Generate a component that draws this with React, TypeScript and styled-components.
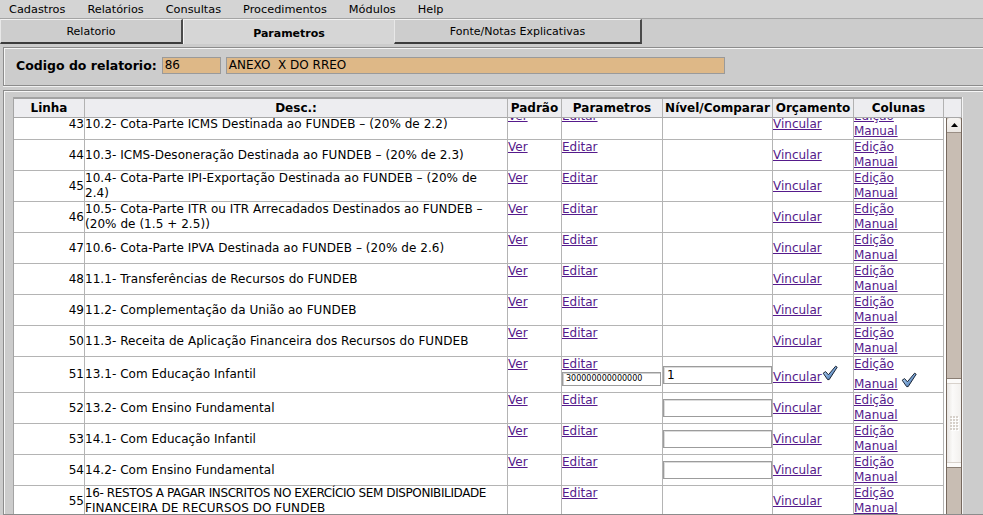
import React from 'react';
import styled, { createGlobalStyle } from 'styled-components';

const Global = createGlobalStyle`
  html, body { margin: 0; padding: 0; overflow: hidden; background: #cccccc; }
  body { font-family: "DejaVu Sans", "Liberation Sans", sans-serif; color: #000; }
  * { box-sizing: border-box; }
`;

const Page = styled.div`
  width: 983px;
  height: 515px;
  overflow: hidden;
  display: flex;
  flex-direction: column;
  background: #cccccc;
`;

const MenuBar = styled.div`
  height: 19px;
  display: flex;
  align-items: center;
  gap: 22px;
  padding-left: 9px;
  background: #d4d4d4;
  border-bottom: 1px solid #a4a4a4;
  font-size: 11.3px;
  flex-shrink: 0;
`;

const MenuItem = styled.span`
  white-space: nowrap;
`;

const TabBar = styled.div`
  height: 25px;
  display: flex;
  flex-shrink: 0;
`;

const Tab = styled.div<{ $w: number; $active?: boolean }>`
  width: ${p => p.$w}px;
  height: 25px;
  display: flex;
  align-items: center;
  justify-content: center;
  font-size: 11px;
  font-weight: ${p => (p.$active ? 700 : 400)};
  background: ${p => (p.$active ? '#d6d6d6' : '#cdcdcd')};
  border-top: 1px solid #f2f2f2;
  border-left: 1px solid ${p => (p.$active ? '#f4f4f4' : '#e8e8e8')};
  border-right: ${p => (p.$active ? '0' : '2px solid #4a4a4a')};
  border-bottom: ${p => (p.$active ? '0' : '2px solid #3c3c3c')};
  padding-top: ${p => (p.$active ? 2 : 0)}px;
`;

const Panel = styled.div`
  margin: 3px -4px 0 3px;
  border: 1px solid #8c8c8c;
  box-shadow: inset 1px 1px 0 #f6f6f6, 0 1px 0 #f0f0f0;
  flex-shrink: 0;
`;

const CodePanel = styled(Panel)`
  height: 39px;
  display: flex;
  align-items: center;
  padding: 0 0 2px 12px;
  gap: 5px;
`;

const Label = styled.span`
  font-weight: 700;
  font-size: 12.5px;
`;

const CodeInput = styled.div<{ $w: number }>`
  width: ${p => p.$w}px;
  height: 17px;
  background: #deb887;
  border: 1px solid #9a9a9a;
  font-size: 12px;
  line-height: 15px;
  padding-left: 2px;
  white-space: pre;
`;

const TablePanel = styled(Panel)`
  margin-top: 4px;
  flex: 1;
  min-height: 0;
  padding: 6px 0 0 9px;
  display: flex;
  flex-direction: column;
`;

const Frame = styled.div`
  width: 950px;
  flex: 1;
  min-height: 0;
  display: flex;
  flex-direction: column;
  border-left: 1px solid #a4a4a4;
  border-right: 1px solid #f4f4f4;
  background: #ffffff;
`;

const COLS = '71px 423px 54px 101px 110px 81px 90px';

const HeaderRow = styled.div`
  display: grid;
  grid-template-columns: ${COLS} 18px;
  border-top: 2px solid #a2a2a2;
  flex-shrink: 0;
`;

const HeadCell = styled.div`
  height: 19px;
  background: #ededf0;
  border-right: 1px solid #b2b2b2;
  border-bottom: 1px solid #a8a8a8;
  font-size: 12px;
  font-weight: 700;
  display: flex;
  align-items: center;
  justify-content: center;
  white-space: nowrap;
  overflow: hidden;
`;

const Body = styled.div`
  flex: 1;
  min-height: 0;
  display: flex;
  gap: 2px;
  overflow: hidden;
`;

const RowsViewport = styled.div`
  width: 930px;
  overflow: hidden;
`;

const RowsList = styled.div<{ $scroll: number }>`
  transform: translateY(-${p => p.$scroll}px);
`;

const Row = styled.div`
  display: grid;
  grid-template-columns: ${COLS};
  border-bottom: 1px solid #b4b4b4;
  font-size: 12px;
  line-height: 15px;
  min-height: 31px;
`;

const Cell = styled.div<{ $align?: 'top' | 'center'; $justify?: 'end' | 'start' }>`
  border-right: 1px solid #b4b4b4;
  display: flex;
  flex-direction: column;
  justify-content: ${p => (p.$align === 'center' ? 'center' : 'flex-start')};
  align-items: ${p => (p.$justify === 'end' ? 'flex-end' : 'flex-start')};
  min-width: 0;
`;

const DescLine = styled.span<{ $tight?: boolean }>`
  display: block;
  white-space: nowrap;
  letter-spacing: ${p => (p.$tight ? '-0.4px' : '0.05px')};
`;

const InlineCell = styled.div`
  border-right: 1px solid #b4b4b4;
  display: flex;
  align-items: center;
  white-space: nowrap;
`;

const Link = styled.a`
  color: #551a8b;
  text-decoration: underline;
  cursor: pointer;
`;

const ParamInput = styled.div`
  width: 99px;
  height: 14px;
  border: 1px solid #9c9c9c;
  box-shadow: inset 1px 1px 0 #d0d0d0;
  font-size: 8px;
  line-height: 12px;
  padding-left: 3px;
  background: #fff;
`;

const NivelInput = styled.div`
  width: 109px;
  height: 18px;
  border: 1px solid #9c9c9c;
  box-shadow: inset 1px 1px 0 #dcdcdc;
  font-size: 12px;
  line-height: 16px;
  padding-left: 3px;
  background: #fff;
`;

const ScrollBar = styled.div`
  width: 16px;
  display: flex;
  flex-direction: column;
  background: #c8bdb3;
  border-left: 1px solid #76695f;
  border-right: 1px solid #76695f;
`;

const ArrowButton = styled.div`
  height: 15px;
  background: linear-gradient(#f6f4f2, #ebe7e3);
  border-bottom: 1px solid #9a8e84;
  border-radius: 3px 3px 0 0;
  display: flex;
  align-items: center;
  justify-content: center;
  flex-shrink: 0;
`;

const Thumb = styled.div<{ $offset: number }>`
  margin-top: ${p => p.$offset}px;
  height: 90px;
  flex-shrink: 0;
  background: linear-gradient(90deg, #e9e6e3, #fbfaf9 40%, #f2f0ee);
  border-top: 1px solid #8a7e74;
  border-bottom: 1px solid #8a7e74;
  display: flex;
  flex-direction: column;
  align-items: center;
  justify-content: center;
  position: relative;
`;

const ThumbBand = styled.div<{ $pos: 'top' | 'bottom' }>`
  position: absolute;
  left: 0;
  right: 0;
  height: 5px;
  ${p => (p.$pos === 'top' ? 'top: 0;' : 'bottom: 0;')}
  background: #fbfaf9;
  border-${p => (p.$pos === 'top' ? 'bottom' : 'top')}: 1px solid #d8d2cc;
`;

const Grip = styled.div`
  display: grid;
  grid-template-columns: repeat(3, 2px);
  gap: 1px;
`;

const Dot = styled.span`
  width: 2px;
  height: 2px;
  background: #d6d0ca;
  box-shadow: 1px 1px 0 #ffffff;
`;

const Check: React.FC<{ id: string }> = ({ id }) => (
  <svg width="16" height="16" viewBox="0 0 16 16" style={{ verticalAlign: 'baseline' }}>
    <defs>
      <linearGradient id={id} x1="0" y1="0" x2="1" y2="1">
        <stop offset="0" stopColor="#d8e8f8" />
        <stop offset="0.5" stopColor="#7ea8d8" />
        <stop offset="1" stopColor="#2a5288" />
      </linearGradient>
    </defs>
    <path
      d="M1.2 8.2 L3.6 6.6 L6.4 9.8 L13.6 1.2 L15.2 2.2 L7.2 14.6 L5.6 14.6 Z"
      fill={`url(#${id})`}
      stroke="#1a2638"
      strokeWidth="1"
      strokeLinejoin="round"
    />
  </svg>
);

type RowData = {
  n: number;
  desc: string[];
  tight?: boolean;
  ver: boolean;
  param?: string;
  nivel?: string;
  checks?: boolean;
};

const rows: RowData[] = [
  { n: 43, desc: ['10.2- Cota-Parte ICMS Destinada ao FUNDEB – (20% de 2.2)'], ver: true },
  { n: 44, desc: ['10.3- ICMS-Desoneração Destinada ao FUNDEB – (20% de 2.3)'], ver: true },
  { n: 45, desc: ['10.4- Cota-Parte IPI-Exportação Destinada ao FUNDEB – (20% de', '2.4)'], ver: true },
  { n: 46, desc: ['10.5- Cota-Parte ITR ou ITR Arrecadados Destinados ao FUNDEB –', '(20% de (1.5 + 2.5))'], ver: true },
  { n: 47, desc: ['10.6- Cota-Parte IPVA Destinada ao FUNDEB – (20% de 2.6)'], ver: true },
  { n: 48, desc: ['11.1- Transferências de Recursos do FUNDEB'], ver: true },
  { n: 49, desc: ['11.2- Complementação da União ao FUNDEB'], ver: true },
  { n: 50, desc: ['11.3- Receita de Aplicação Financeira dos Recursos do FUNDEB'], ver: true },
  { n: 51, desc: ['13.1- Com Educação Infantil'], ver: true, param: '300000000000000', nivel: '1', checks: true },
  { n: 52, desc: ['13.2- Com Ensino Fundamental'], ver: true, nivel: '' },
  { n: 53, desc: ['14.1- Com Educação Infantil'], ver: true, nivel: '' },
  { n: 54, desc: ['14.2- Com Ensino Fundamental'], ver: true, nivel: '' },
  {
    n: 55,
    desc: ['16- RESTOS A PAGAR INSCRITOS NO EXERCÍCIO SEM DISPONIBILIDADE', 'FINANCEIRA DE RECURSOS DO FUNDEB'],
    tight: true,
    ver: false,
  },
];

const menus = ['Cadastros', 'Relatórios', 'Consultas', 'Procedimentos', 'Módulos', 'Help'];
const headers = ['Linha', 'Desc.:', 'Padrão', 'Parametros', 'Nível/Comparar', 'Orçamento', 'Colunas', ''];

export default function App() {
  return (
    <Page>
      <Global />
      <MenuBar>
        {menus.map(m => (
          <MenuItem key={m}>{m}</MenuItem>
        ))}
      </MenuBar>
      <TabBar>
        <Tab $w={183}>Relatorio</Tab>
        <Tab $w={211} $active>Parametros</Tab>
        <Tab $w={248}>Fonte/Notas Explicativas</Tab>
      </TabBar>
      <CodePanel>
        <Label>Codigo do relatorio:</Label>
        <CodeInput $w={59}>86</CodeInput>
        <CodeInput $w={499}>ANEXO  X DO RREO</CodeInput>
      </CodePanel>
      <TablePanel>
        <Frame>
          <HeaderRow>
            {headers.map((h, i) => (
              <HeadCell key={i}>{h}</HeadCell>
            ))}
          </HeaderRow>
          <Body>
            <RowsViewport>
              <RowsList $scroll={9}>
                {rows.map(r => (
                  <Row key={r.n}>
                    <Cell $align="center" $justify="end">{r.n}</Cell>
                    <Cell $align="center">
                      {r.desc.map((line, i) => (
                        <DescLine key={i} $tight={r.tight && i === 0}>
                          {line}
                        </DescLine>
                      ))}
                    </Cell>
                    <Cell>{r.ver && <Link href="#">Ver</Link>}</Cell>
                    <Cell>
                      <Link href="#">Editar</Link>
                      {r.param !== undefined && <ParamInput>{r.param}</ParamInput>}
                    </Cell>
                    <Cell $align="center">
                      {r.nivel !== undefined && <NivelInput>{r.nivel}</NivelInput>}
                    </Cell>
                    <InlineCell>
                      <span>
                        <Link href="#">Vincular</Link>
                        {r.checks && <Check id={`cv${r.n}`} />}
                      </span>
                    </InlineCell>
                    <Cell>
                      <div>
                        <Link href="#">Edição</Link>
                        <br />
                        <Link href="#">Manual</Link>
                        {r.checks && (
                          <>
                            {' '}
                            <Check id={`cm${r.n}`} />
                          </>
                        )}
                      </div>
                    </Cell>
                  </Row>
                ))}
              </RowsList>
            </RowsViewport>
            <ScrollBar>
              <ArrowButton>
                <svg width="7" height="4" viewBox="0 0 7 4">
                  <path d="M0 4 L3.5 0 L7 4 Z" fill="#000" />
                </svg>
              </ArrowButton>
              <Thumb $offset={245}>
                <ThumbBand $pos="top" />
                <Grip>
                  {Array.from({ length: 15 }).map((_, i) => (
                    <Dot key={i} />
                  ))}
                </Grip>
                <ThumbBand $pos="bottom" />
              </Thumb>
            </ScrollBar>
          </Body>
        </Frame>
      </TablePanel>
    </Page>
  );
}
